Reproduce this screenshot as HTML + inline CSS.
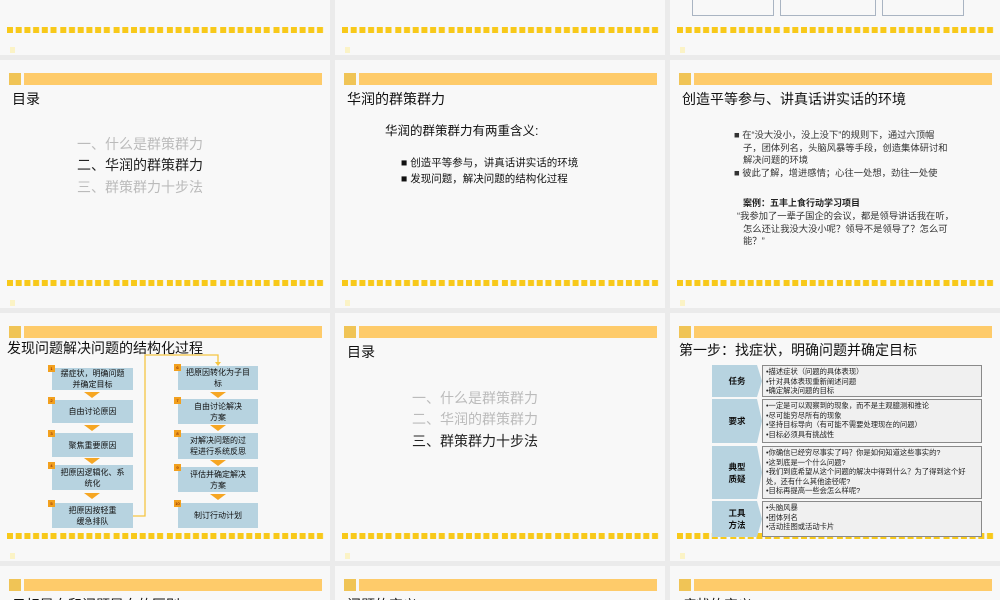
<!DOCTYPE html>
<html style="width:1000px;height:600px;overflow:hidden"><head><meta charset="utf-8"><style>
*{margin:0;padding:0;box-sizing:border-box}
body{width:1000px;height:600px;background:#ebebeb;position:relative;overflow:hidden;font-family:"Liberation Sans","Noto Sans CJK SC",sans-serif;color:#111}
.s{position:absolute;width:330px;height:248px;background:#f8f8f8;overflow:hidden}
.ic{position:absolute;left:9px;top:13px;width:12px;height:12px;background:#f0c456}
.bar{position:absolute;left:24px;top:13px;width:298px;height:12px;background:#fecb6a}
.dash{position:absolute;left:7px;top:220px;width:318px;height:6px}
.ft{position:absolute;left:10px;top:240px;width:5px;height:6px;background:#fbf3c6}
.t{position:absolute;left:12px;top:29px;font-size:14px;white-space:nowrap}
.a{position:absolute;white-space:nowrap}
.bx{position:absolute;background:#b7d3e0;font-size:8px;text-align:center;line-height:11px;display:flex;align-items:center;justify-content:center}
.n{position:absolute;width:7px;height:7px;background:#f2a01e;font-size:4px;color:#600;text-align:center;line-height:7px}
.ar{position:absolute;width:0;height:0;border-left:8px solid transparent;border-right:8px solid transparent;border-top:6px solid #f6a623}
.lab{position:absolute;left:42px;width:50px;background:#b7d3e0;font-size:8.5px;font-weight:bold;display:flex;align-items:center;justify-content:center;text-align:center;line-height:12px;clip-path:polygon(0 0,90% 0,100% 50%,90% 100%,0 100%)}
.rb{position:absolute;left:92px;width:220px;background:#f0f0f0;border:1px solid #8a8a8a;font-size:7.3px;line-height:9.5px;padding:1px 3px;color:#222;overflow:hidden}
</style></head><body>
<svg width="0" height="0" style="position:absolute"><defs><pattern id="dp" width="53.3" height="6" patternUnits="userSpaceOnUse"><g fill="#f8c91a"><rect x="0" y="0" width="6" height="6"/><rect x="8.7" y="0" width="6" height="6"/><rect x="17.4" y="0" width="6" height="6"/><rect x="26.1" y="0" width="6" height="6"/><rect x="34.8" y="0" width="6" height="6"/><rect x="43.5" y="0" width="6" height="6"/></g></pattern></defs></svg>

<div class="s" style="left:0;top:-193px"><svg class="dash"><rect width="318" height="6" fill="url(#dp)"/></svg><div class="ft"></div></div>
<div class="s" style="left:335px;top:-193px"><svg class="dash"><rect width="318" height="6" fill="url(#dp)"/></svg><div class="ft"></div></div>
<div class="s" style="left:670px;top:-193px">
<div class="a" style="left:22px;top:170px;width:82px;height:39px;border:1px solid #a9b4c2"></div>
<div class="a" style="left:110px;top:170px;width:96px;height:39px;border:1px solid #a9b4c2"></div>
<div class="a" style="left:212px;top:170px;width:82px;height:39px;border:1px solid #a9b4c2"></div>
<svg class="dash"><rect width="318" height="6" fill="url(#dp)"/></svg><div class="ft"></div></div>

<div class="s" style="left:0;top:60px"><div class="ic"></div><div class="bar"></div><div class="t">目录</div>
<div class="a" style="left:77px;top:74px;font-size:14px;color:#bbb">一、什么是群策群力</div>
<div class="a" style="left:77px;top:95px;font-size:14px;color:#222">二、华润的群策群力</div>
<div class="a" style="left:77px;top:117px;font-size:14px;color:#bbb">三、群策群力十步法</div>
<svg class="dash"><rect width="318" height="6" fill="url(#dp)"/></svg><div class="ft"></div></div>

<div class="s" style="left:335px;top:60px"><div class="ic"></div><div class="bar"></div><div class="t">华润的群策群力</div>
<div class="a" style="left:50px;top:60px;font-size:12.5px">华润的群策群力有两重含义:</div>
<div class="a" style="left:66px;top:95px;font-size:10.5px">■ 创造平等参与，讲真话讲实话的环境</div>
<div class="a" style="left:66px;top:111px;font-size:10.5px">■ 发现问题，解决问题的结构化过程</div>
<svg class="dash"><rect width="318" height="6" fill="url(#dp)"/></svg><div class="ft"></div></div>

<div class="s" style="left:670px;top:60px"><div class="ic"></div><div class="bar"></div><div class="t">创造平等参与、讲真话讲实话的环境</div>
<div class="a" style="left:64px;top:69px;font-size:9.3px;line-height:12.5px;white-space:normal;width:215px;color:#333;padding-left:9px;text-indent:-9px">■ 在“没大没小，没上没下”的规则下，通过六顶帽子，团体列名，头脑风暴等手段，创造集体研讨和解决问题的环境</div>
<div class="a" style="left:64px;top:107px;font-size:9.3px;line-height:12.5px;color:#333">■ 彼此了解，增进感情；心往一处想，劲往一处使</div>
<div class="a" style="left:73px;top:136px;font-size:9px;font-weight:bold;color:#222">案例：五丰上食行动学习项目</div>
<div class="a" style="left:67px;top:150px;font-size:9.3px;line-height:12.5px;white-space:normal;width:220px;color:#333;padding-left:6px;text-indent:-6px">“我参加了一辈子国企的会议，都是领导讲话我在听，怎么还让我没大没小呢？领导不是领导了？怎么可能？”</div>
<svg class="dash"><rect width="318" height="6" fill="url(#dp)"/></svg><div class="ft"></div></div>

<div class="s" style="left:0;top:313px"><div class="ic"></div><div class="bar"></div><div class="t" style="left:7px;top:25px">发现问题解决问题的结构化过程</div>
<svg class="a" style="left:0;top:0" width="330" height="248"><polyline points="133,203 145,203 145,42 218,42 218,51" fill="none" stroke="#f5c542" stroke-width="1.3"/><polygon points="215,49 221,49 218,53" fill="#f5c542"/></svg>
<div class="bx" style="left:52px;top:55px;width:81px;height:22px">摆症状，明确问题<br>并确定目标</div>
<div class="bx" style="left:52px;top:87px;width:81px;height:23px">自由讨论原因</div>
<div class="bx" style="left:52px;top:120px;width:81px;height:24px">聚焦重要原因</div>
<div class="bx" style="left:52px;top:152px;width:81px;height:25px">把原因逻辑化、系<br>统化</div>
<div class="bx" style="left:52px;top:190px;width:81px;height:25px">把原因按轻重<br>缓急排队</div>
<div class="bx" style="left:178px;top:53px;width:80px;height:24px">把原因转化为子目<br>标</div>
<div class="bx" style="left:178px;top:86px;width:80px;height:25px">自由讨论解决<br>方案</div>
<div class="bx" style="left:178px;top:120px;width:80px;height:26px">对解决问题的过<br>程进行系统反思</div>
<div class="bx" style="left:178px;top:154px;width:80px;height:25px">评估并确定解决<br>方案</div>
<div class="bx" style="left:178px;top:190px;width:80px;height:25px">制订行动计划</div>
<div class="n" style="left:48px;top:52px">1</div><div class="n" style="left:48px;top:84px">2</div><div class="n" style="left:48px;top:117px">3</div><div class="n" style="left:48px;top:149px">4</div><div class="n" style="left:48px;top:187px">5</div>
<div class="n" style="left:174px;top:51px">6</div><div class="n" style="left:174px;top:84px">7</div><div class="n" style="left:174px;top:117px">8</div><div class="n" style="left:174px;top:151px">9</div><div class="n" style="left:174px;top:187px">10</div>
<div class="ar" style="left:84px;top:79px"></div><div class="ar" style="left:84px;top:112px"></div><div class="ar" style="left:84px;top:145px"></div><div class="ar" style="left:84px;top:180px"></div>
<div class="ar" style="left:210px;top:79px"></div><div class="ar" style="left:210px;top:112px"></div><div class="ar" style="left:210px;top:147px"></div><div class="ar" style="left:210px;top:181px"></div>
<svg class="dash"><rect width="318" height="6" fill="url(#dp)"/></svg><div class="ft"></div></div>

<div class="s" style="left:335px;top:313px"><div class="ic"></div><div class="bar"></div><div class="t">目录</div>
<div class="a" style="left:77px;top:75px;font-size:14px;color:#bbb">一、什么是群策群力</div>
<div class="a" style="left:77px;top:96px;font-size:14px;color:#bbb">二、华润的群策群力</div>
<div class="a" style="left:77px;top:118px;font-size:14px;color:#222">三、群策群力十步法</div>
<svg class="dash"><rect width="318" height="6" fill="url(#dp)"/></svg><div class="ft"></div></div>

<div class="s" style="left:670px;top:313px"><div class="ic"></div><div class="bar"></div><div class="t" style="left:9px;top:27px">第一步：找症状，明确问题并确定目标</div>
<svg class="dash"><rect width="318" height="6" fill="url(#dp)"/></svg><div class="ft"></div>
<div class="lab" style="top:52px;height:32px">任务</div>
<div class="lab" style="top:86px;height:44px">要求</div>
<div class="lab" style="top:133px;height:53px">典型<br>质疑</div>
<div class="lab" style="top:188px;height:36px">工具<br>方法</div>
<div class="rb" style="top:52px;height:32px">•描述症状（问题的具体表现）<br>•针对具体表现重新阐述问题<br>•确定解决问题的目标</div>
<div class="rb" style="top:86px;height:44px">•一定是可以观察到的现象，而不是主观臆测和推论<br>•尽可能穷尽所有的现象<br>•坚持目标导向（有可能不需要处理现在的问题）<br>•目标必须具有挑战性</div>
<div class="rb" style="top:133px;height:53px">•你确信已经穷尽事实了吗？你是如何知道这些事实的?<br>•这到底是一个什么问题?<br>•我们到底希望从这个问题的解决中得到什么？为了得到这个好处，还有什么其他途径呢?<br>•目标再提高一些会怎么样呢?</div>
<div class="rb" style="top:188px;height:36px">•头脑风暴<br>•团体列名<br>•活动挂图或活动卡片</div>
</div>

<div class="s" style="left:0;top:566px;height:34px"><div class="ic"></div><div class="bar"></div><div class="t">目标导向和问题导向的区别</div></div>
<div class="s" style="left:335px;top:566px;height:34px"><div class="ic"></div><div class="bar"></div><div class="t">问题的定义</div></div>
<div class="s" style="left:670px;top:566px;height:34px"><div class="ic"></div><div class="bar"></div><div class="t">症状的定义</div></div>
</body></html>
